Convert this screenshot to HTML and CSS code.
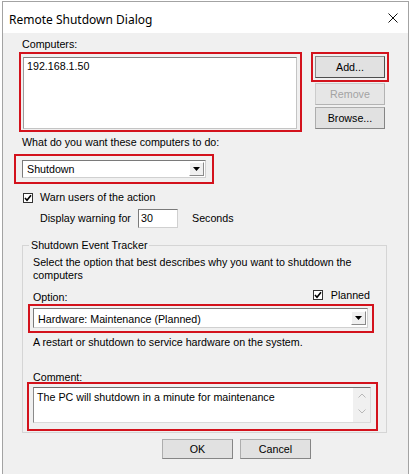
FILE: index.html
```html
<!DOCTYPE html>
<html>
<head>
<meta charset="utf-8">
<link rel="stylesheet" href="styles.css">
</head>
<body>
<div class="window">
  <div class="titlebar">
    <span class="title">Remote Shutdown Dialog</span>
    <svg class="close" width="10" height="10" viewBox="0 0 10 10"><path d="M0.5 0.5 L9.5 9.5 M9.5 0.5 L0.5 9.5" stroke="#111" stroke-width="1" fill="none"/></svg>
  </div>
  <div class="client">
    <div class="lbl lbl-computers">Computers:</div>
    <div class="computers-row">
      <div class="hl hl-list"><div class="listbox">192.168.1.50</div></div>
      <div class="btn-col">
        <div class="hl hl-add"><button class="btn btn-default">Add...</button></div>
        <button class="btn btn-remove">Remove</button>
        <button class="btn btn-browse">Browse...</button>
      </div>
    </div>
    <div class="lbl lbl-action">What do you want these computers to do:</div>
    <div class="hl hl-action">
      <div class="combo combo-action"><span class="combo-text">Shutdown</span><span class="drop"><svg width="7" height="4" viewBox="0 0 7 4"><polygon points="0,0 7,0 3.5,4" fill="#000"/></svg></span></div>
    </div>
    <div class="check-row">
      <span class="checkbox"><svg width="8" height="8" viewBox="0 0 8 8"><path d="M1 4 L3 6.2 L7 1.2" stroke="#000" stroke-width="1.6" fill="none"/></svg></span>
      <span>Warn users of the action</span>
    </div>
    <div class="warn-row">
      <span class="warn-label">Display warning for</span>
      <span class="num">30</span>
      <span class="seconds">Seconds</span>
    </div>
    <fieldset class="group">
      <legend>Shutdown Event Tracker</legend>
      <div class="desc">Select the option that best describes why you want to shutdown the<br>computers</div>
      <div class="option-row">
        <span class="opt-label">Option:</span>
        <span class="planned">
          <span class="checkbox"><svg width="8" height="8" viewBox="0 0 8 8"><path d="M1 4 L3 6.2 L7 1.2" stroke="#000" stroke-width="1.6" fill="none"/></svg></span>
          <span>Planned</span>
        </span>
      </div>
      <div class="hl hl-option">
        <div class="combo combo-option"><span class="combo-text">Hardware: Maintenance (Planned)</span><span class="drop"><svg width="7" height="4" viewBox="0 0 7 4"><polygon points="0,0 7,0 3.5,4" fill="#000"/></svg></span></div>
      </div>
      <div class="restart">A restart or shutdown to service hardware on the system.</div>
      <div class="comment-label">Comment:</div>
      <div class="hl hl-comment">
        <div class="textarea">
          <span class="ta-text">The PC will shutdown in a minute for maintenance</span>
          <span class="scroll">
            <svg width="8" height="5" viewBox="0 0 8 5"><path d="M0.5 4.5 L4 1 L7.5 4.5" stroke="#b8b8b8" stroke-width="1" fill="none"/></svg>
            <svg width="8" height="5" viewBox="0 0 8 5"><path d="M0.5 0.5 L4 4 L7.5 0.5" stroke="#b8b8b8" stroke-width="1" fill="none"/></svg>
          </span>
        </div>
      </div>
    </fieldset>
    <div class="actions">
      <button class="btn btn-ok">OK</button>
      <button class="btn btn-cancel">Cancel</button>
    </div>
  </div>
</div>
</body>
</html>
```
FILE: styles.css
```css
* { box-sizing: border-box; }
html, body { margin: 0; padding: 0; }
body {
  background: #ffffff;
  font-family: "Liberation Sans", Arial, sans-serif;
  font-size: 10.7px;
  line-height: 13px;
  color: #000;
}
.window {
  margin: 1px 0 0 2px;
  width: 407px;
  height: 473px;
  border: 1px solid #a3a3a3;
  border-bottom: 0;
  background: #f0f0f0;
  overflow: hidden;
}
.titlebar {
  height: 31px;
  background: #ffffff;
  display: flex;
  justify-content: space-between;
  align-items: flex-start;
  padding: 10px 10px 0 6px;
}
.title {
  font-family: "Noto Sans", "Open Sans", sans-serif;
  font-size: 12px;
  line-height: 16px;
  color: #000;
}
.close { margin-top: 1px; display: block; }
.client { padding: 5px 0 0 16px; }
.lbl-computers { margin-left: 3px; }
.computers-row {
  display: flex;
  align-items: flex-start;
  margin-top: 1px;
}
.hl { border: 2px solid #d3121c; }
.hl-list {
  width: 283px;
  height: 80px;
  padding: 3px 3px 1px 2px;
}
.listbox {
  height: 100%;
  background: #fff;
  border: 1px solid #c4c4c4;
  border-top-color: #828282;
  border-left-color: #9c9c9c;
  padding: 2px 3px;
}
.btn-col {
  margin-left: 9px;
  display: flex;
  flex-direction: column;
  align-items: flex-start;
}
.hl-add { padding: 2px; }
.btn {
  font-family: inherit;
  font-size: 10.7px;
  line-height: 13px;
  color: #000;
  width: 70px;
  height: 22px;
  padding: 0;
  margin: 0;
  display: flex;
  align-items: center;
  justify-content: center;
  background: #e1e1e1;
  border: 1px solid #adadad;
  border-right-color: #858585;
  border-bottom-color: #858585;
}
.btn-default {
  border-color: #8a8a8a;
  border-right-color: #4e4e4e;
  border-bottom-color: #4e4e4e;
}
.btn-remove {
  margin: 1px 0 0 4px;
  color: #a3a3a3;
  background: #e6e6e6;
  border-color: #cccccc;
  border-right-color: #b3b3b3;
  border-bottom-color: #b3b3b3;
}
.btn-browse { margin: 2px 0 0 4px; }
.lbl-action { margin: 4px 0 0 3px; }
.hl-action {
  margin: 5px 0 0 -5px;
  width: 200px;
  padding: 4px 6px;
}
.combo {
  background: #fff;
  border: 1px solid #d0d0d0;
  border-top-color: #7a7a7a;
  border-left-color: #7a7a7a;
  display: flex;
  align-items: center;
  justify-content: space-between;
  padding-left: 4px;
}
.combo-action { height: 18px; }
.drop {
  width: 15px;
  height: 14px;
  margin-right: 1px;
  border: 1px solid;
  border-color: #ffffff #8a8a8a #8a8a8a #ffffff;
  background: #f0f0f0;
  display: flex;
  align-items: center;
  justify-content: center;
}
.drop svg { display: block; }
.check-row {
  display: flex;
  align-items: flex-start;
  gap: 7px;
  margin: 7px 0 0 4px;
}
.checkbox {
  width: 10px;
  height: 10px;
  margin-top: 2px;
  background: #fff;
  border: 1px solid #333;
  display: flex;
  align-items: center;
  justify-content: center;
}
.checkbox svg { display: block; }
.warn-row {
  display: flex;
  align-items: center;
  height: 19px;
  margin: 5px 0 0 21px;
}
.warn-label { width: 98px; }
.num {
  width: 40px;
  height: 19px;
  background: #fff;
  border: 1px solid #d0d0d0;
  border-top-color: #7a7a7a;
  border-left-color: #7a7a7a;
  padding: 2px 2px 0;
}
.seconds { margin-left: 14px; }
.group {
  margin: 11px 0 0 3px;
  width: 365px;
  min-width: 0;
  border: 1px solid #d5d5d5;
  padding: 4px 10px 1px 10px;
}
.group legend {
  margin-left: -4px;
  padding: 0 2px;
  line-height: 13px;
}
.option-row {
  display: flex;
  justify-content: space-between;
  align-items: flex-start;
  margin-top: 7px;
}
.opt-label { margin-top: 2px; }
.planned {
  display: flex;
  align-items: flex-start;
  gap: 8px;
  margin-right: 6px;
}
.planned .checkbox { margin-top: 1px; }
.hl-option {
  margin-left: -5px;
  width: 346px;
  padding: 2px 4px 3px 3px;
}
.combo-option { height: 20px; }
.combo-option .combo-text { padding-top: 2px; }
.restart { margin-top: 3px; }
.comment-label { margin-top: 22px; }
.hl-comment {
  margin: -2px 0 0 -6px;
  width: 351px;
  padding: 3px 5px 6px 4px;
}
.textarea {
  height: 36px;
  background: #fff;
  border: 1px solid #dadada;
  border-top-color: #6e6e6e;
  border-left-color: #8a8a8a;
  display: flex;
  justify-content: space-between;
}
.ta-text { padding: 3px 0 0 3px; }
.scroll {
  width: 17px;
  height: 100%;
  background: #f0f0f0;
  display: flex;
  flex-direction: column;
  justify-content: space-between;
  align-items: center;
  padding: 5px 0 8px;
}
.scroll svg { display: block; }
.actions {
  display: flex;
  gap: 7px;
  margin: 6px 0 0 143px;
}
.actions .btn { width: 71px; height: 20px; }
```
